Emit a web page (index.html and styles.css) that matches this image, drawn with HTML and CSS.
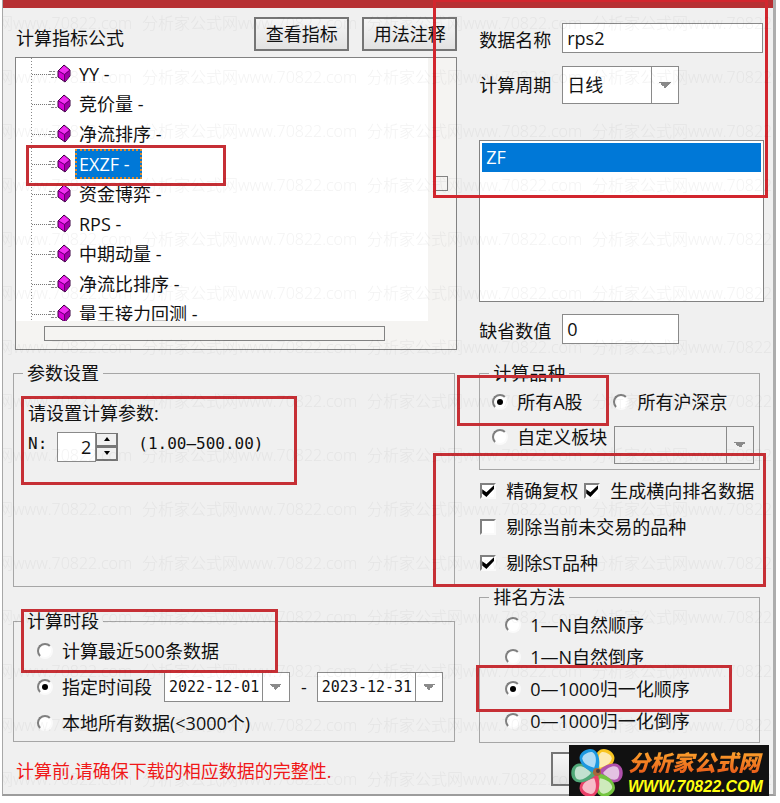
FILE: index.html
```html
<!DOCTYPE html>
<html lang="zh-CN">
<head>
  <meta charset="utf-8">
  <title>数据计算</title>
  <link rel="stylesheet" href="styles.css">
</head>
<body>

<svg class="defs" aria-hidden="true">
  <symbol id="node" viewBox="0 0 42 30">
    <path d="M2 15.500H20" stroke="#777" stroke-dasharray="1 1"/>
    <path d="M19 12.500H25M18 15.500H26M21 18.500H27" stroke="#888" stroke-dasharray="3 1"/>
    <path d="M34 6L40 11V17L35 23L28 18V12Z" fill="#d800d8" stroke="#3a0040"/>
    <path d="M34 7L39 11L34 15L29 12Z" fill="#f030f0"/>
    <path d="M35 15L39.500 11.500V17L35 22Z" fill="#a000a8"/>
    <path d="M28.500 12L34.500 15.500L39.500 11.500M34.500 15.500V22" fill="none" stroke="#60006a"/>
  </symbol>
</svg>

<form class="dialog">
  <div class="titlebar"></div>
  <div class="content">

    <div class="left">
      <div class="head">
        <span class="head-title">计算指标公式</span>
        <button type="button" class="btn">查看指标</button>
        <button type="button" class="btn">用法注释</button>
      </div>

      <div class="tree">
        <ul class="tree-list">
          <li><svg><use href="#node"/></svg><span>YY -</span></li>
          <li><svg><use href="#node"/></svg><span>竞价量 -</span></li>
          <li><svg><use href="#node"/></svg><span>净流排序 -</span></li>
          <li><svg><use href="#node"/></svg><span class="selected">EXZF -</span></li>
          <li><svg><use href="#node"/></svg><span>资金博弈 -</span></li>
          <li><svg><use href="#node"/></svg><span>RPS -</span></li>
          <li><svg><use href="#node"/></svg><span>中期动量 -</span></li>
          <li><svg><use href="#node"/></svg><span>净流比排序 -</span></li>
          <li><svg><use href="#node"/></svg><span>量王接力回测 -</span></li>
        </ul>
        <div class="vbar"><div class="vthumb"></div></div>
        <div class="hbar"><div class="hthumb"></div></div>
      </div>

      <fieldset class="params">
        <legend>参数设置</legend>
        <div class="param-title">请设置计算参数:</div>
        <div class="param-row">
          <label class="mono" for="n">N:</label>
          <span class="spin">
            <input class="field" id="n" type="text" value="2">
            <span class="spin-buttons">
              <button type="button" aria-label="增加"><svg viewBox="0 0 6 4"><path d="M0 4L3 0L6 4Z"/></svg></button>
              <button type="button" aria-label="减少"><svg viewBox="0 0 6 4"><path d="M0 0L3 4L6 0Z"/></svg></button>
            </span>
          </span>
          <span class="mono range">(1.00—500.00)</span>
        </div>
      </fieldset>

      <fieldset class="period">
        <legend>计算时段</legend>
        <div class="row"><label><input type="radio" name="period">计算最近500条数据</label></div>
        <div class="row">
          <label><input type="radio" name="period" checked>指定时间段</label>
          <select class="field combo date" aria-label="开始日期"><option>2022-12-01</option></select>
          <span class="dash">-</span>
          <select class="field combo date" aria-label="结束日期"><option>2023-12-31</option></select>
        </div>
        <div class="row"><label><input type="radio" name="period">本地所有数据(&lt;3000个)</label></div>
      </fieldset>

      <p class="warning">计算前,请确保下载的相应数据的完整性.</p>

      <i class="mark mark-formula"></i>
      <i class="mark mark-params"></i>
      <i class="mark mark-period"></i>
    </div>

    <div class="right">
      <div class="pair name-row">
        <label for="name">数据名称</label>
        <input class="field wide" id="name" type="text" value="rps2">
      </div>
      <div class="pair cycle-row">
        <label for="cycle">计算周期</label>
        <select class="field combo" id="cycle"><option>日线</option></select>
      </div>
      <select class="list" size="5" aria-label="输出数据"><option selected>ZF</option></select>
      <div class="pair default-row">
        <label for="default">缺省数值</label>
        <input class="field" id="default" type="text" value="0">
      </div>

      <fieldset class="stocks">
        <legend>计算品种</legend>
        <div class="row">
          <label><input type="radio" name="stocks" checked>所有A股</label>
          <label class="second"><input type="radio" name="stocks">所有沪深京</label>
        </div>
        <div class="row custom">
          <label><input type="radio" name="stocks">自定义板块</label>
          <select class="field combo" disabled aria-label="板块"><option></option></select>
        </div>
      </fieldset>

      <div class="checks">
        <div class="row">
          <label><input type="checkbox" checked>精确复权</label>
          <label><input type="checkbox" checked>生成横向排名数据</label>
        </div>
        <div class="row"><label><input type="checkbox">剔除当前未交易的品种</label></div>
        <div class="row"><label><input type="checkbox" checked>剔除ST品种</label></div>
      </div>

      <fieldset class="rank">
        <legend>排名方法</legend>
        <div class="row"><label><input type="radio" name="rank">1—N自然顺序</label></div>
        <div class="row"><label><input type="radio" name="rank">1—N自然倒序</label></div>
        <div class="row"><label><input type="radio" name="rank" checked>0—1000归一化顺序</label></div>
        <div class="row"><label><input type="radio" name="rank">0—1000归一化倒序</label></div>
      </fieldset>

      <button type="button" class="btn submit" aria-label="计算"></button>

      <i class="mark mark-name"></i>
      <i class="mark mark-stocks"></i>
      <i class="mark mark-checks"></i>
      <i class="mark mark-rank"></i>
    </div>
  </div>

  <svg class="watermark" aria-hidden="true">
    <defs>
      <pattern id="wm" x="139" y="-5" width="225" height="54" patternUnits="userSpaceOnUse">
        <text x="0" y="34">分析家公式网</text>
        <text x="96" y="34">www.70822.com</text>
      </pattern>
    </defs>
    <rect width="100%" height="100%" fill="url(#wm)"/>
  </svg>

  <div class="logo">
    <svg viewBox="0 0 54 54">
      <defs>
        <g id="petal">
          <path d="M27 27C20 22 15 11 19 5C22 0 32 0 35 5C39 11 34 22 27 27Z"/>
          <path d="M27 21C22 17 19 11 21 7C23 4 31 4 33 7C35 11 32 17 27 21Z" fill="#fff" fill-opacity=".65"/>
        </g>
      </defs>
      <use href="#petal" fill="#f8c420" transform="rotate(28 27 27)"/>
      <use href="#petal" fill="#b050ac" transform="rotate(90 27 27)"/>
      <use href="#petal" fill="#74c440" transform="rotate(150 27 27)"/>
      <use href="#petal" fill="#e84068" transform="rotate(208 27 27)"/>
      <use href="#petal" fill="#50a878" transform="rotate(270 27 27)"/>
      <use href="#petal" fill="#1c98e0" transform="rotate(332 27 27)"/>
      <circle cx="27" cy="26" r="4" fill="#a8683a"/>
      <circle cx="28" cy="25" r="2" fill="#503a38"/>
    </svg>
    <div class="logo-text">
      <strong>分析家公式网</strong>
      <em>WWW.70822.COM</em>
    </div>
  </div>
</form>

</body>
</html>
```
FILE: styles.css
```css
* { box-sizing: border-box; }
body {
  margin: 0;
  background: #fff;
  color: #111;
  font: 18px/24px "Open Sans", "Noto Sans CJK SC", sans-serif;
}
input, select, button { font: inherit; color: inherit; margin: 0; }
fieldset { margin: 0; padding: 0; border: 1px solid #a6a6a6; min-width: 0; }
legend { padding: 0 4px; margin-left: 9px; line-height: 24px; }
.defs { display: none; }

/* window */
.dialog {
  position: relative;
  margin: 0 4px 0 2px;
  background: #f0f0f0;
  border: 1px solid #a8a8a8;
  border-top: 0;
  border-right: 3px solid #adadad;
  border-bottom: 2px solid #9c9c9c;
}
.titlebar { height: 8px; background: #b73033; }
.content {
  display: grid;
  grid-template-columns: 443fr 284fr;
  gap: 22px;
  padding: 9px 9px 8px 10px;
}
.left, .right { position: relative; min-width: 0; }

/* shared controls */
.btn {
  width: 95px;
  height: 34px;
  padding: 0;
  border: 2px solid #757575;
  background: linear-gradient(#f6f6f6, #e2e2e2);
  white-space: nowrap;
}
.field {
  height: 30px;
  padding: 0 4px;
  border: 1px solid #8a8a8a;
  border-radius: 0;
  background-color: #fff;
  outline: 0;
}
.combo {
  appearance: none;
  height: 38px;
  background-image:
    linear-gradient(#8a8a8a, #8a8a8a),
    linear-gradient(to top right, transparent 50%, #8a8a8a 50%),
    linear-gradient(to top left, transparent 50%, #8a8a8a 50%);
  background-repeat: no-repeat;
  background-position: right 26px top 0, right 13px center, right 7px center;
  background-size: 1px 100%, 6px 6px, 6px 6px;
}
.combo:disabled { background-color: #f0f0f0; opacity: 1; }
.row, .row label { display: flex; align-items: center; white-space: nowrap; }

input[type="radio"], input[type="checkbox"] {
  appearance: none;
  flex: none;
  width: 16px;
  height: 16px;
  background: #fff;
  border: 2px solid #fafafa;
  border-top-color: #808080;
  border-left-color: #808080;
  display: grid;
  place-items: center;
}
input[type="radio"] { border-radius: 50%; margin-right: 9px; }
input[type="checkbox"] { margin-right: 10px; }
input[type="radio"]:checked::before {
  content: "";
  width: 6px;
  height: 6px;
  border-radius: 50%;
  background: #000;
}
input[type="checkbox"]:checked::before {
  content: "";
  width: 12px;
  height: 12px;
  background: #000;
  clip-path: polygon(0 35%, 35% 60%, 100% 0, 100% 32%, 35% 100%, 0 70%);
}

/* left column */
.head { display: flex; align-items: center; gap: 13px; }
.head-title { flex: 1; padding: 8px 0 0 3px; }

.tree {
  display: grid;
  grid-template-columns: 1fr 28px;
  grid-template-rows: 263px 28px;
  margin: 6px 0 0 2px;
  border: 1px solid #828282;
  background: #f5f4f2;
}
.tree-list {
  margin: 0;
  padding: 1px 0 0 14px;
  list-style: none;
  overflow: hidden;
  background: repeating-linear-gradient(#888 0 1px, transparent 1px 3px) 15px 0 / 1px 100% no-repeat #fff;
}
.tree-list li { display: flex; align-items: center; height: 30px; }
.tree-list svg { width: 42px; height: 30px; margin-right: 3px; }
.tree-list span { padding: 0 12px 0 3px; line-height: 28px; border: 1px solid transparent; }
.tree-list .selected { background: #0078d7; color: #fff; border: 2px dotted #e08a28; padding: 0 11px 0 2px; line-height: 26px; }
.vbar { padding: 118px 0 0 5px; }
.vthumb { width: 15px; height: 15px; border: 1px solid #828282; }
.hbar { grid-column: 1 / 3; padding: 5px 71px 0 28px; }
.hthumb { height: 15px; border: 1px solid #828282; }

.params { margin: 11px 2px 0 0; padding-bottom: 124px; }
.param-title { padding: 16px 0 0 14px; }
.param-row { display: flex; align-items: center; height: 37px; padding-left: 14px; }
.mono { font: 16px/24px "DejaVu Sans Mono", monospace; }
.spin { display: flex; align-items: center; margin: 6px 20px 0 10px; }
.spin .field { width: 39px; text-align: right; }
.spin-buttons { display: flex; flex-direction: column; }
.spin-buttons button {
  display: flex;
  align-items: center;
  justify-content: center;
  width: 22px;
  height: 14px;
  padding: 0;
  background: #f0f0f0;
  border: 1px solid #777;
  border-right-width: 2px;
  border-bottom-width: 2px;
}
.spin-buttons svg { width: 6px; height: 4px; }

.period { margin: 22px 2px 0 0; }
.period .row { height: 36px; padding-left: 23px; }
.date {
  width: 126px;
  height: 30px;
  margin-left: 12px;
  font: 15px/24px "DejaVu Sans Mono", monospace;
}
.dash { margin-left: 11px; }
.dash + .date { margin-left: 10px; }
.warning { margin: 17px 0 0 3px; color: #f01818; }

/* right column */
.pair { display: flex; align-items: center; }
.pair label { width: 83px; flex: none; padding-top: 4px; }
.pair .field { width: 117px; }
.pair .wide { flex: 1; width: auto; min-width: 0; margin-right: 1px; }
.name-row { margin-top: 6px; }
.cycle-row { margin-top: 13px; }
.cycle-row label { padding: 0; }
.list {
  display: block;
  width: 100%;
  height: 162px;
  margin: 36px 0 12px;
  padding: 2px;
  border: 1px solid #828282;
  border-radius: 0;
  background: #fff;
  overflow: hidden;
}
.list option { min-height: 29px; padding: 2px 4px; }
.list option:checked { background: #0078d7 linear-gradient(#0078d7, #0078d7); color: #fff; }

.stocks { margin: 17px 4px 0 0; padding-bottom: 5px; }
.stocks .row { height: 33px; padding-left: 12px; }
.stocks .second { margin-left: 30px; }
.stocks .custom { align-items: flex-start; height: 38px; margin-top: 8px; }
.custom label { height: 22px; }
.custom .field { flex: 1; margin: 0 5px 0 7px; }

.checks { margin-top: 3px; }
.checks .row { height: 36px; gap: 6px; padding-left: 1px; }

.rank { margin: 4px 4px 0 0; padding-bottom: 5px; }
.rank .row { height: 32px; padding-left: 25px; }
.submit { display: block; margin: 9px 0 0 72px; }

/* red marker frames, drawn over the form */
.mark { position: absolute; border: 3px solid #c62f35; pointer-events: none; }
.mark-formula { left: 13px; top: 128px; width: 200px; height: 41px; }
.mark-params { left: 8px; top: 379px; width: 276px; height: 89px; }
.mark-period { left: 8px; top: 592px; width: 257px; height: 64px; }
.mark-name { left: -46px; right: -4px; top: -18px; height: 199px; border-color: #d2262e; }
.mark-stocks { left: -22px; top: 358px; width: 152px; height: 51px; }
.mark-checks { left: -46px; right: -2px; top: 436px; height: 134px; }
.mark-rank { left: -3px; top: 648px; width: 256px; height: 47px; }

.watermark {
  position: absolute;
  inset: 0;
  width: 100%;
  height: 100%;
  pointer-events: none;
}
.watermark text { font-size: 16px; font-weight: 300; fill: rgba(0, 0, 0, .05); }

.logo {
  position: absolute;
  right: 4px;
  bottom: -6px;
  display: flex;
  align-items: center;
  width: 200px;
  height: 55px;
  background: #111;
}
.logo svg { width: 54px; height: 54px; margin: 0 4px 0 1px; flex: none; }
.logo-text { display: flex; flex-direction: column; white-space: nowrap; }
.logo strong {
  font: italic 900 22px/28px "Noto Sans CJK SC", sans-serif;
  background: linear-gradient(#ffb030, #e85818);
  background-clip: text;
  color: transparent;
}
.logo em { font: italic bold 16px/24px "Liberation Sans", sans-serif; color: #ffff10; }
```
